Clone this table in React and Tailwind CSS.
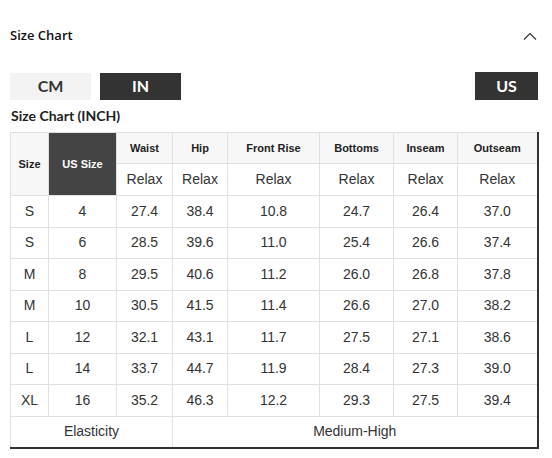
import React from 'react';

const rows = [
  ['S', '4', '27.4', '38.4', '10.8', '24.7', '26.4', '37.0'],
  ['S', '6', '28.5', '39.6', '11.0', '25.4', '26.6', '37.4'],
  ['M', '8', '29.5', '40.6', '11.2', '26.0', '26.8', '37.8'],
  ['M', '10', '30.5', '41.5', '11.4', '26.6', '27.0', '38.2'],
  ['L', '12', '32.1', '43.1', '11.7', '27.5', '27.1', '38.6'],
  ['L', '14', '33.7', '44.7', '11.9', '28.4', '27.3', '39.0'],
  ['XL', '16', '35.2', '46.3', '12.2', '29.3', '27.5', '39.4'],
];

const cols = ['Waist', 'Hip', 'Front Rise', 'Bottoms', 'Inseam', 'Outseam'];
const widths = [38, 68, 56, 55, 92, 74, 64, 80];

export default function App() {
  const cell = 'border border-[#e0e0e0] text-center p-0';

  return (
    <div className="w-[552px] h-[458px] bg-white text-[#333] overflow-hidden" style={{ fontFamily: 'Lato, "Open Sans", sans-serif' }}>
      {/* accordion header */}
      <div className="flex items-center justify-between pl-[10px] pr-[15px] pt-[26px] h-[46px]">
        <span className="text-[13px] font-semibold text-[#111]" style={{ fontFamily: '"Open Sans", Lato, sans-serif' }}>Size Chart</span>
        <svg width="14" height="8" viewBox="0 0 14 8" fill="none" stroke="#333" strokeWidth="1.2">
          <path d="M1 7.5L7 1.5L13 7.5" />
        </svg>
      </div>

      {/* unit / region toggles */}
      <div className="flex items-center justify-between mt-[26px] pl-[10px] pr-[14px]">
        <div className="flex gap-[9px]">
          <button className="w-[81px] h-[27px] bg-[#f3f3f3] text-[16px] font-bold text-[#333]">CM</button>
          <button className="w-[81px] h-[27px] bg-[#333] text-[16px] font-bold text-white">IN</button>
        </div>
        <button className="w-[63px] h-[28px] bg-[#333] text-[16px] font-bold text-white">US</button>
      </div>

      <div className="pl-[11px] mt-[7px] text-[14px] font-bold text-[#222] leading-[18px]">Size Chart (INCH)</div>

      <div className="pl-[10px] mt-[7px]">
        <table
          className="border-collapse table-fixed w-[528px] border-r-2 border-b-2 border-r-[#333] border-b-[#333]"
          style={{ fontFamily: '"Liberation Sans", Arial, sans-serif' }}
        >
          <colgroup>
            {widths.map((w, i) => (
              <col key={i} style={{ width: w }} />
            ))}
          </colgroup>
          <tbody>
            <tr className="h-[31px] bg-[#f7f7f7]">
              <td rowSpan={2} className={`${cell} text-[11px] font-bold text-[#222]`}>Size</td>
              <td rowSpan={2} className={`${cell} bg-[#444] text-white text-[11px] font-bold`}>US Size</td>
              {cols.map((c) => (
                <td key={c} className={`${cell} text-[11px] font-bold text-[#222]`}>{c}</td>
              ))}
            </tr>
            <tr className="h-[32px]">
              {cols.map((c) => (
                <td key={c} className={`${cell} text-[14px] bg-white`}>Relax</td>
              ))}
            </tr>
            {rows.map((r, i) => (
              <tr key={i} className="h-[31.5px]">
                {r.map((v, j) => (
                  <td key={j} className={`${cell} text-[14px]`}>{v}</td>
                ))}
              </tr>
            ))}
            <tr className="h-[32px]">
              <td colSpan={3} className={`${cell} text-[14px]`}>Elasticity</td>
              <td colSpan={5} className={`${cell} text-[14px]`}>Medium-High</td>
            </tr>
          </tbody>
        </table>
      </div>
    </div>
  );
}
